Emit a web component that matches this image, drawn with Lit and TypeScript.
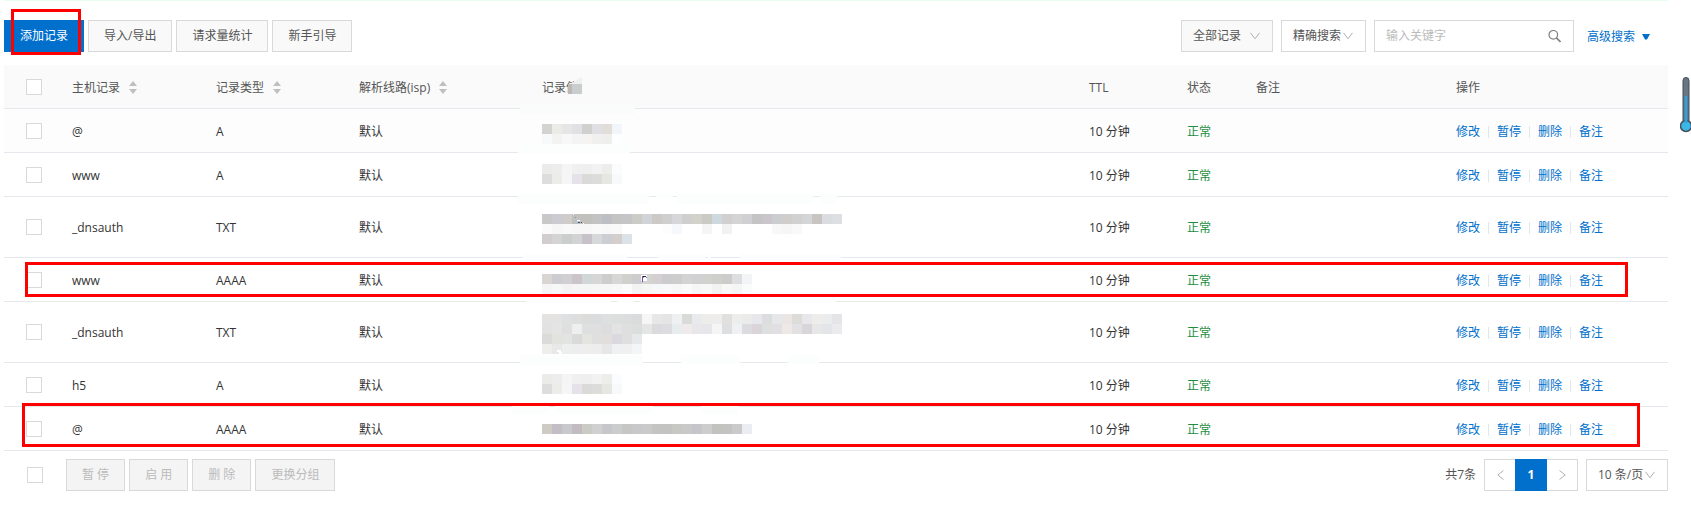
import { LitElement, html, svg, css } from "lit";
import { customElement, property } from "lit/decorators.js";

type Block = [x: number, y: number, w: number, h: number, color: string];

interface DnsRecord {
  host: string;
  type: string;
  mask: string[][];
  maskTop: number;
  height: number;
  smears: Block[];
  specks?: Block[];
  mark?: string;
}

const CELL = 10;
const SMEAR = "#fcfdfd";

const SHORT_A = [
  ["#d3d3d2", "#ebebe8", "#e6e6e6", "#e1e0e5", "#d0d0cf", "#dfdfe4", "#e1ded9", "#f2f6fa"],
  ["#f8f9fb", "#f3f3f1", "#f8f8f8", "#f4f4f5", "#f5f4f3", "#f0f0ef", "#efefed", "#fdfeff"],
];
const SHORT_B = [
  ["#ebebea", "#ededed", "#f5f5f5", "#f0f0f1", "#efefef", "#f2f2f3", "#ededec", "#fbfcfe"],
  ["#dddddd", "#ececeb", "#f6f6f6", "#e5e3e9", "#dadbd8", "#dcdcda", "#e7e7e1", "#f8f9fb"],
];
const LONG_TXT = [
  ["#c8c8c9", "#cbcbd1", "#d0cccc", "#c0c0bf", "#c1c0bd", "#c3c3c3", "#bebfc4", "#c4c4c5", "#c5c5c8", "#cbccc6", "#d1d3d7", "#cccac7", "#cfcfcf", "#d7d7da", "#cfcfcf", "#d2d2ca", "#cacbc4", "#cdd8df", "#d1cfcf", "#d4d4d5", "#d0d0d3", "#c4c4c5", "#cac5cb", "#cccdd0", "#d0cdcd", "#d1d1d2", "#d4d5d7", "#c8c4c2", "#dbdce0", "#dedfe2"],
  ["#fbfafa", "#f6f6f6", "#f9f9f9", "#f7f7f7", "#f7f7f7", "#f9f9fa", "#f8f8f8", "#f9f9f9", "#ffffff", "#ffffff", "#ffffff", "#ffffff", "#fdfdfd", "#f7f8fb", "#ffffff", "#ffffff", "#f5f5f5", "#ffffff", "#f2f2f2", "#ffffff", "#ffffff", "#ffffff", "#ffffff", "#f8f8f8", "#f6f6f6", "#f9f9f9"],
  ["#d1cccd", "#d4d4d4", "#cccecd", "#d2d3d5", "#c7c2c9", "#d7d8d9", "#cdced3", "#d4cfcc", "#dce3e8"],
];
const V6_A = [
  ["#d9d5d3", "#cdcdd1", "#d0cfd1", "#cbc4c9", "#d1d6d6", "#d6d6d6", "#cdcdcc", "#d7d7d8", "#d0d0cd", "#cdcdcf", "#d4d4d3", "#d4d0d2", "#ccccce", "#cdcdcd", "#d3d3d3", "#d1d1d4", "#d1d1cf", "#cfd0cb", "#cccccb", "#dddee1", "#f3f4f6"],
  ["#f5f5f5", "#f7f7f7", "#f3f3f3", "#f5f5f5", "#f5f5f5", "#f5f6f5", "#f6f6f6", "#f8f8f8", "#fbfbfb", "#f3f3f4", "#f6f6f5", "#f7f8fa", "#f9f9fa", "#f7f7f7", "#fafafa", "#f6f6f6", "#f8f8f6", "#f2f2f2", "#f8f8f7", "#f4f5f4", "#fafbfb"],
];
const LONG_TXT_B = [
  ["#e3e3e3", "#e5e3e1", "#dee0e1", "#dddede", "#dcdddb", "#dbdcdd", "#dedfdf", "#dddede", "#dcdddd", "#dbdbdd", "#f5f6f5", "#e7e7e7", "#e5e5e5", "#eef0f1", "#dadad9", "#e9eaed", "#efedec", "#ededee", "#e2e0df", "#eceeee", "#ebebea", "#e8e8ec", "#dcddde", "#e6e7e8", "#ebe6e5", "#dcdcd8", "#e8e8ec", "#efedeb", "#ebecee", "#e5e5e8"],
  ["#e2e2e3", "#e4e4e4", "#dfdfe0", "#efefef", "#dedfdf", "#dfdfdf", "#dddddf", "#e3e3e3", "#dfdfe0", "#dcdddd", "#e4e6e5", "#dcdadd", "#dddce0", "#e7edee", "#eeebea", "#e8e8eb", "#e7e6ea", "#f5f5f5", "#dedfe1", "#f0f1f2", "#dcdce0", "#d9d5d9", "#dce0de", "#e2dfe4", "#eee9e7", "#e2e2e4", "#d8d6da", "#e7e7e7", "#e4e5e9", "#ebebee"],
  ["#dbdbda", "#e2e2df", "#e2e4e2", "#dbdadb", "#e4e5e1", "#dfdfe0", "#e1dedb", "#d9d9df", "#dfdfdf", "#e7e8e9"],
  ["#eeeeed", "#e8e8e8", "#edeeee", "#ededef", "#eeeeed", "#ededed", "#e7e7e7", "#eff1f2", "#f0f0f0", "#f4f5f6"],
];
const V6_B = [
  ["#cecac4", "#c3bdc5", "#c8c9ca", "#c2bbbf", "#cacbc5", "#d0d0d1", "#c6c6cb", "#cbcccc", "#c6c6c4", "#c8c8ca", "#cacaca", "#c4c4c2", "#c3c3c2", "#c7c8c4", "#c9c9c9", "#c6c6ca", "#cccdcc", "#c2c2bf", "#c3c3c1", "#cacacb", "#ecedf2"],
];

const RECORDS: DnsRecord[] = [
  {
    host: "@", type: "A", mask: SHORT_A, maskTop: 15, height: 43,
    smears: [[-22, -4, 115, 9, "#fafbfb"], [-24, 35, 112, 10, SMEAR]],
  },
  {
    host: "www", type: "A", mask: SHORT_B, maskTop: 11, height: 43,
    smears: [[-24, 41, 131, 10, SMEAR], [114, 41, 17, 4, SMEAR], [135, 41, 136, 10, SMEAR], [278, 41, 17, 10, SMEAR]],
  },
  {
    host: "_dnsauth", type: "TXT", mask: LONG_TXT, maskTop: 17, height: 60,
    smears: [[-19, 57, 104, 6, SMEAR], [116, 57, 47, 6, SMEAR], [166, 57, 3, 6, SMEAR], [198, 57, 101, 6, SMEAR]],
    specks: [[31, 17, 1, 1, "#fff"], [33, 20, 1, 1, "#5f9fa8"], [35, 23, 3, 1, "#fff"], [36, 25, 2, 1, "#1c5da8"], [39, 25, 1, 1, "#7d3c1c"], [41, 26, 1, 1, "#fff"]],
  },
  {
    host: "www", type: "AAAA", mask: V6_A, maskTop: 16, height: 43, mark: "mark-inner",
    smears: [[-16, 42, 85, 3, SMEAR], [75, 42, 17, 3, SMEAR], [98, 42, 196, 3, SMEAR]],
    specks: [[99, 17, 6, 6, "#fff"], [100, 18, 1, 6, "#6a4fc0"], [101, 18, 3, 1, "#1d2440"], [101, 19, 1, 1, "#d08a3c"], [104, 19, 1, 1, "#4d86d8"]],
  },
  {
    host: "_dnsauth", type: "TXT", mask: LONG_TXT_B, maskTop: 12, height: 60,
    smears: [[-22, 53, 123, 10, SMEAR], [139, 53, 59, 9, SMEAR], [246, 53, 31, 9, SMEAR]],
    specks: [[15, 48, 4, 2, "#fff"], [17, 50, 3, 2, "#fff"]],
  },
  {
    host: "h5", type: "A", mask: SHORT_B, maskTop: 11, height: 43,
    smears: [[-30, 42, 37, 9, SMEAR], [13, 42, 98, 9, SMEAR], [159, 42, 37, 9, SMEAR]],
  },
  { host: "@", type: "AAAA", mask: V6_B, maskTop: 17, height: 43, smears: [], mark: "mark-outer" },
];

const block = ([x, y, w, h, color]: Block) =>
  svg`<rect x=${x} y=${y} width=${w} height=${h} fill=${color}></rect>`;

/* A record value hidden behind a grid of flat squares. */
@customElement("masked-value")
class MaskedValue extends LitElement {
  @property({ attribute: false }) record!: DnsRecord;

  static styles = css`
    :host { display: block; }
    .mosaic { display: block; overflow: visible; shape-rendering: crispEdges; }
  `;

  render() {
    const { mask, maskTop, height, smears, specks = [] } = this.record;
    return html`<svg class="mosaic" width="300" height=${height} role="img" aria-label="记录值">
      ${smears.map(block)}
      ${mask.map((row, r) => row.map((c, i) => block([i * CELL, maskTop + r * CELL, CELL, CELL, c])))}
      ${specks.map(block)}
    </svg>`;
  }
}

const chevron = html`<svg class="chevron" width="10" height="8" viewBox="0 0 10 8" aria-hidden="true">
  <path d="M.5 .8 5 6.8 9.5 .8" fill="none" stroke="#b0b0b0" stroke-width="1"></path>
</svg>`;

@customElement("app-root")
class AppRoot extends LitElement {
  static styles = css`
    :host {
      display: block;
      position: relative;
      font: 12px/18px "Open Sans", "Noto Sans CJK SC", sans-serif;
      color: #333;
      background: #fff;
    }
    * { box-sizing: border-box; }
    button, input, select { font: inherit; color: inherit; margin: 0; border-radius: 0; }
    a { color: #0070cc; text-decoration: none; }

    .page { margin: 0 23px 0 4px; border-top: 1px solid #e6fdf0; padding-bottom: 24px; }
    .bar { display: flex; justify-content: space-between; align-items: center; }
    .toolbar { padding: 19px 18px 13px 0; }
    .footer { padding: 8px 0 0 23px; color: #555; }
    .group { display: flex; align-items: center; gap: 4px; }
    .filters { gap: 8px; }

    .btn {
      height: 32px; padding: 0 15px; border: 1px solid #d9d9d9;
      background: #f9f9f9; color: #555; white-space: nowrap;
    }
    .btn.primary { background: #0070cc; border-color: #0070cc; color: #fff; }
    .btn:disabled { background: #f4f4f4; color: #bbb; }
    .marked { position: relative; display: flex; }
    .mark { position: absolute; border: 3px solid #f00; pointer-events: none; }
    .mark-button { left: 7px; right: 3px; top: -11px; bottom: -3px; }
    .mark-inner { left: 21px; right: 40px; top: 4px; bottom: 5px; }
    .mark-outer { left: 18px; right: 28px; top: -4px; bottom: 4px; }

    .picker { position: relative; display: flex; color: #555; }
    .picker select {
      appearance: none; height: 32px; padding: 0 11px;
      border: 1px solid #d9d9d9; background: #fff; width: 85px;
    }
    .picker .wide { width: 92px; background: #f9f9f9; }
    .picker .size { width: 82px; }
    .chevron { position: absolute; right: 13px; top: 12px; pointer-events: none; }
    .search {
      display: flex; align-items: center; width: 200px; height: 32px;
      border: 1px solid #d9d9d9; padding: 0 12px 0 11px;
    }
    .search input { flex: 1; min-width: 0; border: 0; padding: 0; outline: 0; background: none; }
    .search input::placeholder { color: #bbb; opacity: 1; }
    .advanced { display: flex; align-items: center; gap: 7px; margin-left: 5px; padding-top: 2px; }

    .check {
      appearance: none; display: block; width: 16px; height: 16px;
      border: 1px solid #d9d9d9; background: #fff;
    }
    .check:checked { background: #0070cc; }

    table { width: 100%; table-layout: fixed; border-collapse: separate; border-spacing: 0; }
    th, td { padding: 2px 16px 0; border-bottom: 1px solid #e5e9ed; text-align: left; white-space: nowrap; }
    th { height: 44px; background: #fafafa; color: #555; font-weight: 400; }
    tr { position: relative; }
    .hovered { background: #fdfdfd; }
    .pick { padding: 0 0 0 22px; }
    .value { padding: 0 16px; }
    .c-pick { width: 52px; }
    .c-host { width: 144px; }
    .c-type { width: 143px; }
    .c-line { width: 183px; }
    .c-ttl { width: 98px; }
    .c-state { width: 69px; }
    .c-note { width: 200px; }
    .c-ops { width: 228px; }
    .sort {
      display: inline-flex; align-items: center; gap: 9px;
      border: 0; padding: 0; background: none;
    }
    .value-head { position: relative; }
    .smudge { position: absolute; left: 42px; top: 12px; }
    .ok { color: #1e8e3e; }
    .ops { display: flex; align-items: center; gap: 8px; }
    .rule { width: 1px; height: 12px; background: #e3e6ea; }

    .batch { gap: 23px; }
    .pager { display: flex; margin: 0 4px; }
    .step {
      width: 31px; height: 32px; padding: 0; border: 1px solid #d9d9d9; background: #fff;
      display: grid; place-items: center;
    }
    .prev { border-right: 0; }
    .next { border-left: 0; }
    .current { width: 32px; background: #0070cc; border-color: #0070cc; color: #fff; font-weight: 700; }
    .gauge { position: absolute; right: 0; top: 76px; }
  `;

  private sortable(label: string) {
    return html`<button class="sort">${label}
      <svg width="8" height="13" viewBox="0 0 8 13" fill="#bfbfbf" aria-hidden="true">
        <path d="M4 0 8 5H0z"></path><path d="M0 8h8l-4 5z"></path>
      </svg></button>`;
  }

  private ops() {
    return html`<div class="ops">
      ${["修改", "暂停", "删除", "备注"].map((t, i) => html`${i ? html`<span class="rule"></span>` : ""}<a href="#">${t}</a>`)}
    </div>`;
  }

  private row(r: DnsRecord, i: number) {
    return html`<tr class=${i === 0 ? "hovered" : ""}>
      <td class="pick"><input class="check" type="checkbox" aria-label="选择 ${r.host}" /></td>
      <td>${r.host}</td>
      <td>${r.type}</td>
      <td>默认</td>
      <td class="value"><masked-value .record=${r}></masked-value></td>
      <td>10 分钟</td>
      <td class="ok">正常</td>
      <td></td>
      <td>${this.ops()}${r.mark ? html`<div class="mark ${r.mark}"></div>` : ""}</td>
    </tr>`;
  }

  render() {
    return html`
      <main class="page">
        <div class="bar toolbar">
          <div class="group">
            <div class="marked">
              <button class="btn primary">添加记录</button>
              <div class="mark mark-button"></div>
            </div>
            <button class="btn">导入/导出</button>
            <button class="btn">请求量统计</button>
            <button class="btn">新手引导</button>
          </div>
          <div class="group filters">
            <div class="picker">
              <select class="wide" aria-label="记录范围"><option>全部记录</option></select>${chevron}
            </div>
            <div class="picker">
              <select aria-label="搜索方式"><option>精确搜索</option></select>${chevron}
            </div>
            <label class="search">
              <input type="text" placeholder="输入关键字" aria-label="输入关键字" />
              <svg width="13" height="13" viewBox="0 0 13 13" fill="none" stroke="#808080" aria-hidden="true">
                <circle cx="5.3" cy="4.8" r="4.3" stroke-width="1.2"></circle>
                <path d="M8.400 7.900 12.500 12" stroke-width="1.6"></path>
              </svg>
            </label>
            <a class="advanced" href="#">高级搜索
              <svg width="8" height="6" viewBox="0 0 8 6" fill="#0070cc" aria-hidden="true"><path d="M0 0h8L5 5.500H3z"></path></svg>
            </a>
          </div>
        </div>

        <table>
          <colgroup>
            <col class="c-pick" /><col class="c-host" /><col class="c-type" /><col class="c-line" /><col />
            <col class="c-ttl" /><col class="c-state" /><col class="c-note" /><col class="c-ops" />
          </colgroup>
          <thead>
            <tr>
              <th class="pick"><input class="check" type="checkbox" aria-label="全选" /></th>
              <th>${this.sortable("主机记录")}</th>
              <th>${this.sortable("记录类型")}</th>
              <th>${this.sortable("解析线路(isp)")}</th>
              <th class="value-head">记录值
                <svg class="smudge" width="14" height="17" viewBox="0 0 14 17" aria-hidden="true">
                  <path d="M3 6 14 0V7H3z" fill="#efefef"></path>
                  <path d="M0 7h4v10H0z" fill="#b9b9ba"></path>
                  <path d="M4 7h10v10H4z" fill="#cacdcd"></path>
                </svg>
              </th>
              <th>TTL</th>
              <th>状态</th>
              <th>备注</th>
              <th>操作</th>
            </tr>
          </thead>
          <tbody>${RECORDS.map((r, i) => this.row(r, i))}</tbody>
        </table>

        <div class="bar footer">
          <div class="group batch">
            <input class="check" type="checkbox" aria-label="全选" />
            <div class="group">
              <button class="btn" disabled>暂 停</button>
              <button class="btn" disabled>启 用</button>
              <button class="btn" disabled>删 除</button>
              <button class="btn" disabled>更换分组</button>
            </div>
          </div>
          <div class="group">
            <span>共7条</span>
            <nav class="pager" aria-label="分页">
              <button class="step prev" aria-label="上一页">
                <svg width="7" height="10" viewBox="0 0 7 10" fill="none" stroke="#b0b0b0"><path d="M6.500 .5.800 5l5.700 4.500"></path></svg>
              </button>
              <button class="step current" aria-current="page">1</button>
              <button class="step next" aria-label="下一页">
                <svg width="7" height="10" viewBox="0 0 7 10" fill="none" stroke="#b0b0b0"><path d="M.5 .5 6.200 5 .5 9.500"></path></svg>
              </button>
            </nav>
            <div class="picker">
              <select class="size" aria-label="每页条数"><option>10 条/页</option></select>${chevron}
            </div>
          </div>
        </div>
      </main>
      <svg class="gauge" width="11" height="57" viewBox="0 0 11 57" aria-hidden="true">
        <rect x="3" y="1.500" width="6" height="48" rx="3" fill="#6a7782" stroke="#414d59"></rect>
        <circle cx="6" cy="50" r="5.500" fill="#3db7e6" stroke="#46525e" stroke-width="1.500"></circle>
        <path d="M6 20v27" stroke="#2ba3e3" stroke-width="2.500"></path>
      </svg>
    `;
  }
}
